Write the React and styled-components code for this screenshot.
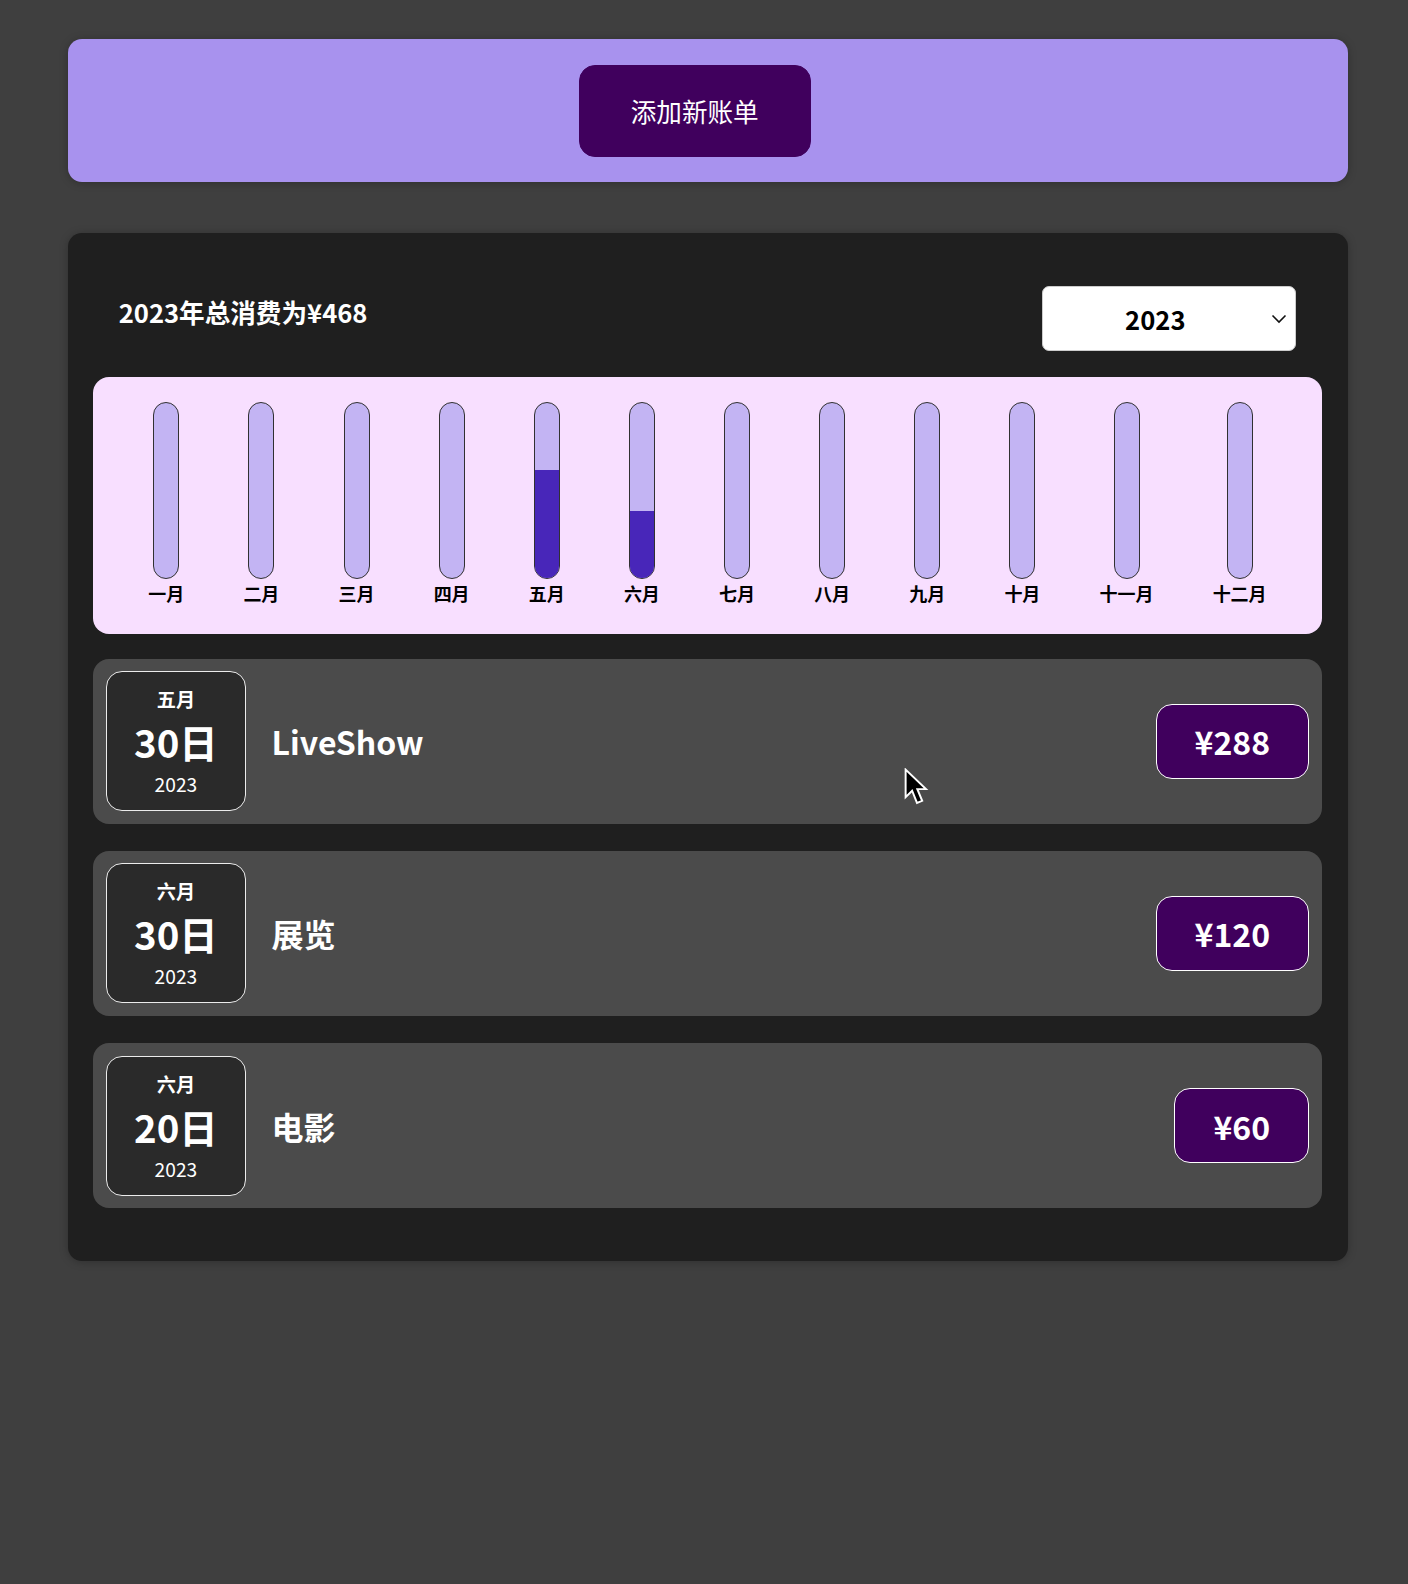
import styled, { createGlobalStyle } from "styled-components";

const GlobalStyle = createGlobalStyle`
  html, body {
    margin: 0;
    padding: 0;
    background: #3f3f3f;
  }
  body {
    font-family: "Noto Sans CJK SC", "Noto Sans", sans-serif;
    min-height: 1584px;
  }
  * { box-sizing: border-box; }
`;

const Page = styled.div`
  position: relative;
  padding: 39px 0 0 7px;
  min-height: 1584px;
`;

const Card = styled.div`
  width: 1280px;
  margin: 0 auto;
  padding: 25.6px;
  border-radius: 14px;
  box-shadow: 0 1px 8px rgba(0, 0, 0, 0.25);
`;

const NewExpense = styled(Card)`
  background: #a892ee;
  text-align: center;
`;

const AddButton = styled.button`
  font: inherit;
  font-size: 25.6px;
  line-height: 39px;
  padding: 25.6px 51.2px;
  margin-right: 25.6px;
  border: 1px solid #40005d;
  background: #40005d;
  color: #fff;
  border-radius: 16px;
  cursor: pointer;
`;

const Expenses = styled(Card)`
  background: #1f1f1f;
  margin-top: 51px;
`;

const FilterRow = styled.div`
  display: flex;
  justify-content: space-between;
  align-items: center;
  margin: 26.6px 0 26px;
  padding: 0 25.6px;
`;

const FilterLabel = styled.label`
  color: #fff;
  font-weight: bold;
  font-size: 25.6px;
  margin-bottom: 12.8px;
`;

const SelectWrap = styled.div`
  position: relative;
  width: 254px;
  height: 65px;
`;

const Select = styled.select`
  appearance: none;
  width: 100%;
  height: 100%;
  font: inherit;
  font-size: 25.6px;
  font-weight: bold;
  color: #000;
  background: #fff;
  border: 1px solid #ccc;
  border-radius: 7px;
  padding: 0 40px 0 12px;
  text-align-last: center;
  outline: none;
`;

const Chevron = styled.svg`
  position: absolute;
  right: 9px;
  top: 28px;
  pointer-events: none;
`;

const Chart = styled.div`
  height: 257px;
  padding: 25.6px;
  border-radius: 16px;
  background: #f8dfff;
  display: flex;
  justify-content: space-around;
`;

const BarColumn = styled.div`
  display: flex;
  flex-direction: column;
  align-items: center;
  height: 100%;
`;

const BarInner = styled.div`
  flex: 1;
  width: 26px;
  border: 1px solid #313131;
  border-radius: 13px;
  background: #c3b4f3;
  overflow: hidden;
  display: flex;
  flex-direction: column;
  justify-content: flex-end;
`;

const BarFill = styled.div`
  background: #4826b9;
`;

const BarLabel = styled.div`
  font-size: 18px;
  line-height: 29px;
  font-weight: bold;
  color: #000;
  white-space: nowrap;
`;

const List = styled.ul`
  list-style: none;
  margin: 0;
  padding: 25px 0 26.6px;
  display: flex;
  flex-direction: column;
  gap: 26.5px;
`;

const Item = styled.li`
  display: flex;
  align-items: center;
  padding: 12.8px;
  border-radius: 16px;
  background: #4b4b4b;
`;

const DateBox = styled.div`
  width: 140px;
  height: 140px;
  flex-shrink: 0;
  display: flex;
  flex-direction: column;
  align-items: center;
  justify-content: flex-start;
  padding-top: 13px;
  border: 1px solid #ececec;
  border-radius: 16px;
  background: #2a2a2a;
  color: #fff;
`;

const DateMonth = styled.div`
  font-size: 19.2px;
  font-weight: bold;
  line-height: 28px;
`;

const DateDay = styled.div`
  font-size: 38.4px;
  font-weight: bold;
  line-height: 52px;
  margin-top: 2px;
`;

const DateYear = styled.div`
  font-size: 19.2px;
  line-height: 28px;
  margin-top: 3px;
`;

const Title = styled.h2`
  flex: 1;
  margin: 0 25.6px;
  font-size: 32px;
  font-weight: bold;
  color: #fff;
`;

const Price = styled.div`
  font-size: 32px;
  font-weight: bold;
  line-height: 48px;
  color: #fff;
  background: #40005d;
  border: 1px solid #fff;
  border-radius: 16px;
  padding: 12.8px 38px;
`;

const Cursor = styled.svg`
  position: absolute;
  left: 904px;
  top: 768px;
`;

const months = ["一月", "二月", "三月", "四月", "五月", "六月", "七月", "八月", "九月", "十月", "十一月", "十二月"];

const expenses = [
  { id: 1, month: 4, day: 30, title: "LiveShow", amount: 288 },
  { id: 2, month: 5, day: 30, title: "展览", amount: 120 },
  { id: 3, month: 5, day: 20, title: "电影", amount: 60 },
];

export default function App() {
  const total = expenses.reduce((s, e) => s + e.amount, 0);
  const byMonth = months.map((_, i) =>
    expenses.filter((e) => e.month === i).reduce((s, e) => s + e.amount, 0)
  );

  return (
    <Page>
      <GlobalStyle />
      <NewExpense>
        <AddButton>添加新账单</AddButton>
      </NewExpense>

      <Expenses>
        <FilterRow>
          <FilterLabel>2023年总消费为¥{total}</FilterLabel>
          <SelectWrap>
            <Select defaultValue="2023">
              <option value="2023">2023</option>
              <option value="2022">2022</option>
              <option value="2021">2021</option>
            </Select>
            <Chevron width="16" height="10" viewBox="0 0 16 10">
              <path d="M1.5 1.5 L8 8 L14.5 1.5" fill="none" stroke="#111" strokeWidth="1.6" />
            </Chevron>
          </SelectWrap>
        </FilterRow>

        <Chart>
          {months.map((m, i) => (
            <BarColumn key={m}>
              <BarInner>
                <BarFill style={{ height: `${(byMonth[i] / total) * 100}%` }} />
              </BarInner>
              <BarLabel>{m}</BarLabel>
            </BarColumn>
          ))}
        </Chart>

        <List>
          {expenses.map((e) => (
            <Item key={e.id}>
              <DateBox>
                <DateMonth>{months[e.month]}</DateMonth>
                <DateDay>{e.day}日</DateDay>
                <DateYear>2023</DateYear>
              </DateBox>
              <Title>{e.title}</Title>
              <Price>¥{e.amount}</Price>
            </Item>
          ))}
        </List>
      </Expenses>

      <Cursor width="26" height="39" viewBox="0 0 16 24">
        <path d="M1 1 L1 18 L5 14 L8 21.5 L11.2 20.2 L8.2 13 L13.5 13 Z" fill="#000" stroke="#fff" strokeWidth="1.2" strokeLinejoin="miter" />
      </Cursor>
    </Page>
  );
}
